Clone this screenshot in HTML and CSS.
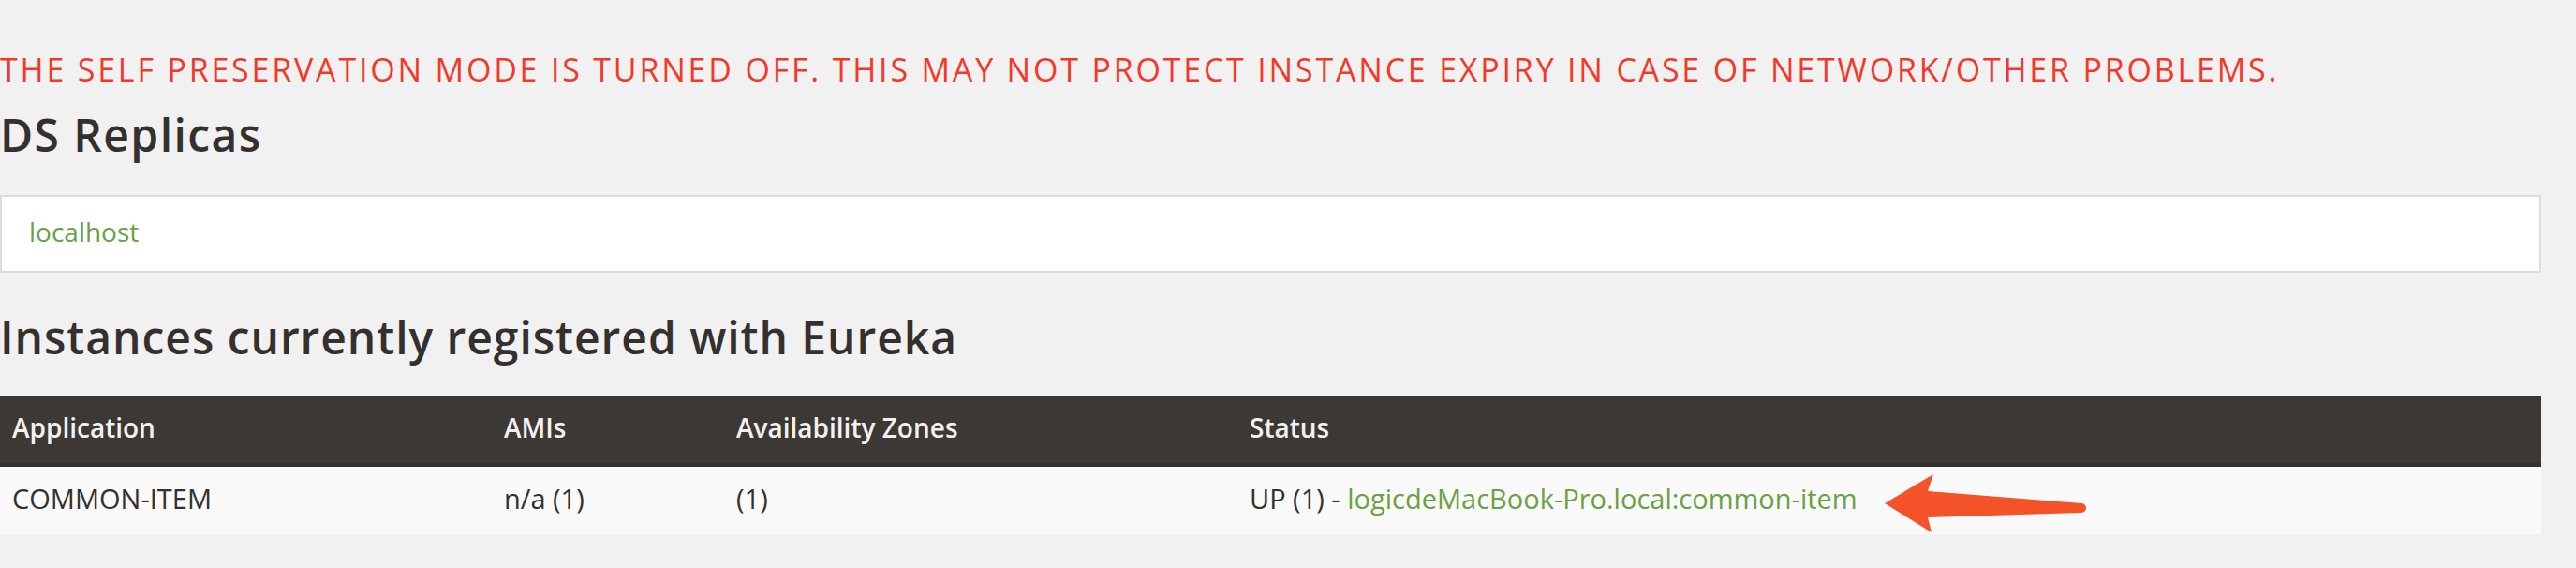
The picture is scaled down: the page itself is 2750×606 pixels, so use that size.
FILE: index.html
```html
<!DOCTYPE html>
<html>
<head>
<meta charset="utf-8">
<link rel="stylesheet" href="styles.css">
</head>
<body>
<div class="page">
  <h4 class="warning">THE SELF PRESERVATION MODE IS TURNED OFF. THIS MAY NOT PROTECT INSTANCE EXPIRY IN CASE OF NETWORK/OTHER PROBLEMS.</h4>
  <h1 class="title title-ds">DS Replicas</h1>
  <ul class="replicas">
    <li class="replica"><a class="link" href="#">localhost</a></li>
  </ul>
  <h1 class="title title-inst">Instances currently registered with Eureka</h1>
  <table class="instances">
    <colgroup>
      <col class="c1"><col class="c2"><col class="c3"><col class="c4">
    </colgroup>
    <thead>
      <tr><th>Application</th><th>AMIs</th><th>Availability Zones</th><th>Status</th></tr>
    </thead>
    <tbody>
      <tr><td>COMMON-ITEM</td><td>n/a (1)</td><td>(1)</td><td>UP (1) - <a class="link" href="#">logicdeMacBook-Pro.local:common-item</a></td></tr>
    </tbody>
  </table>
  <svg class="arrow" width="230" height="75" viewBox="0 0 230 75" xmlns="http://www.w3.org/2000/svg">
    <path d="M12 37 L64 6 L58 24 L222 37 A5 5 0 0 1 222 47 L58 52 L62 68 Z" fill="#f4532a"/>
  </svg>
</div>
</body>
</html>
```

FILE: styles.css
```css
html, body {
  margin: 0;
  padding: 0;
  background: #f1f1f1;
}

.page {
  position: relative;
  display: flow-root;
  width: 2713px;
  height: 606px;
  font-family: "Open Sans", "Liberation Sans", sans-serif;
  color: #34302d;
}

.warning {
  margin: 54px 0 0 0;
  font-size: 34px;
  line-height: 40px;
  font-weight: 500;
  letter-spacing: 2.8px;
  color: #f3382a;
  white-space: nowrap;
}

.title {
  margin: 0;
  font-weight: 600;
  font-size: 48px;
  color: #34302d;
  white-space: nowrap;
}

.title-ds {
  margin-top: 20px;
  line-height: 60px;
  letter-spacing: 1.4px;
}

.title-inst {
  margin-top: 41px;
  margin-bottom: 34px;
  line-height: 56px;
  letter-spacing: 0.95px;
}

.replicas {
  list-style: none;
  margin: 34px 0 0 0;
  padding: 0;
}

.replica {
  background: #ffffff;
  border: 2px solid #dddddd;
  box-sizing: border-box;
  height: 83px;
  padding: 17px 29px 0 29px;
  font-size: 28px;
  line-height: 40px;
}

.link {
  color: #6aa142;
  text-decoration: none;
}

.instances {
  width: 2713px;
  table-layout: fixed;
  border-collapse: collapse;
  font-size: 29px;
}

.c1 { width: 525px; }
.c2 { width: 248px; }
.c3 { width: 548px; }

.instances th {
  background: #3c3834;
  color: #f1f1f1;
  font-weight: 600;
  font-size: 28px;
  text-align: left;
  height: 72px;
  box-sizing: border-box;
  padding: 0 13px 4px 13px;
  line-height: 68px;
  border-bottom: 4px solid #34302d;
  white-space: nowrap;
}

.instances td {
  background: #f9f9f9;
  height: 72px;
  box-sizing: border-box;
  padding: 0 13px 4px 13px;
  line-height: 68px;
  white-space: nowrap;
}

.arrow {
  position: absolute;
  left: 2000px;
  top: 500px;
}
```
